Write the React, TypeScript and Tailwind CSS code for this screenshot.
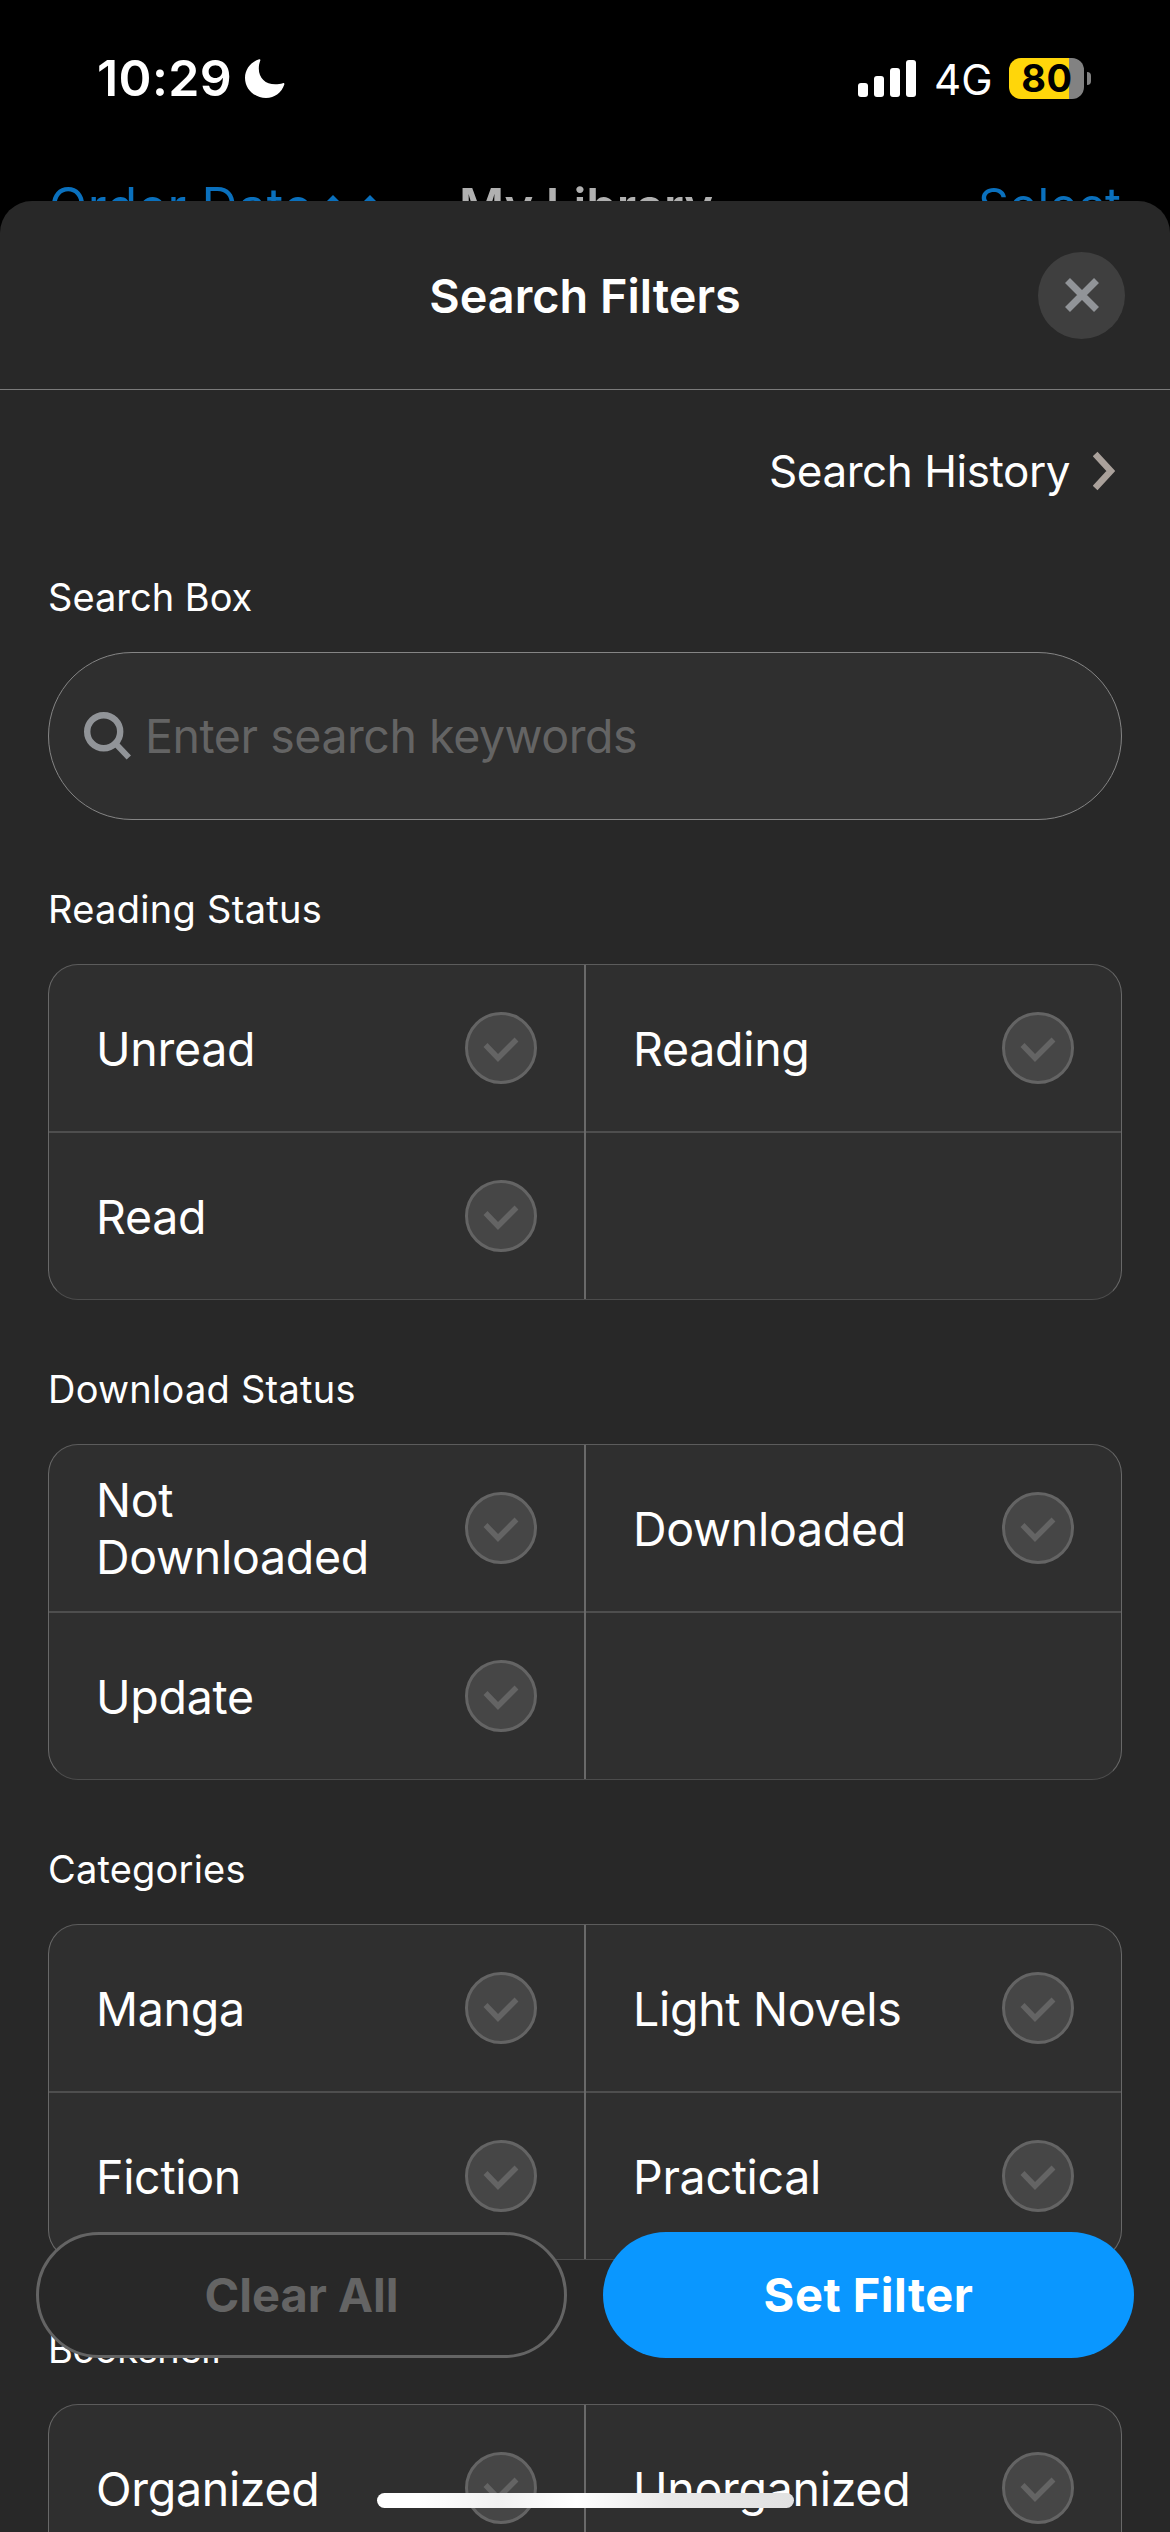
type Option = string | null;

type Group = { title: string; tracking: string; options: Option[] };

const GROUPS: Group[] = [
  { title: 'Reading Status', tracking: 'tracking-[0.3px]', options: ['Unread', 'Reading', 'Read', null] },
  { title: 'Download Status', tracking: 'tracking-[0.25px]', options: ['Not Downloaded', 'Downloaded', 'Update', null] },
  { title: 'Categories', tracking: 'tracking-[0.2px]', options: ['Manga', 'Light Novels', 'Fiction', 'Practical'] },
  { title: 'Bookshelf', tracking: 'tracking-[-0.4px]', options: ['Organized', 'Unorganized', null, null] },
];

function StatusBar() {
  return (
    <div className="flex h-[156px] items-center justify-between pl-[97px] pr-[79px] text-white">
      <div className="flex items-center">
        <span className="text-[50px] font-semibold leading-none tracking-[0.4px]">10:29</span>
        <svg className="ml-[13px] mt-px h-[39px] w-[40px]" viewBox="0 0 40 39" fill="currentColor">
          <path d="M14.2 0.2C15 0 15.6 0.6 15.3 1.5C14.3 4 13.8 6.6 13.8 9.4C13.8 19.2 20.6 25.3 30.2 25.3C33 25.3 35.5 25 37.8 24.2C38.9 23.8 39.7 24.4 39.3 25.5C36.8 33.4 29.7 39 21 39C9.500 39 0 30 0 18.900C0 10.200 6 2.800 14.200 0.200Z" />
        </svg>
      </div>
      <div className="flex items-center">
        <div className="flex h-[37px] items-end gap-[6px]">
          <div className="h-[14px] w-[10px] rounded-[3px] bg-white" />
          <div className="h-[21px] w-[10px] rounded-[3px] bg-white" />
          <div className="h-[29px] w-[10px] rounded-[3px] bg-white" />
          <div className="h-[37px] w-[10px] rounded-[3px] bg-white" />
        </div>
        <span className="ml-[18px] mt-[3px] w-[57px] text-[42px] leading-none">4G</span>
        <div className="ml-[18px] flex h-[41px] w-[75px] items-center justify-center rounded-[12px] bg-[linear-gradient(to_right,#ffd60a_60px,#828282_60px)]">
          <span className="ml-px text-[38px] font-bold leading-none tracking-[0.6px] text-black">80</span>
        </div>
        <div className="ml-[3px] h-[13px] w-[4px] rounded-r-full bg-[#828282]" />
      </div>
    </div>
  );
}

function LibraryNav() {
  return (
    <div className="grid h-[100px] grid-cols-[1fr_auto_1fr] items-center px-[49px] leading-none">
      <div className="flex items-center text-[#0a70bd]">
        <span className="text-[50px] tracking-[0.6px]">Order Date</span>
        <svg className="ml-[9px] h-[26px] w-[60px]" viewBox="0 0 60 26" fill="currentColor">
          <path d="M11 2L22 13L11 24L0 13Z" />
          <path d="M48 2L59 13L48 24L37 13Z" />
        </svg>
      </div>
      <span className="pl-[2px] text-[49px] font-semibold text-[#b0b0b0]">My Library</span>
      <span className="text-right text-[48.5px] text-[#0a70bd]">Select</span>
    </div>
  );
}

function CheckCircle() {
  return (
    <svg className="h-[72px] w-[72px] shrink-0" viewBox="0 0 72 72" fill="none">
      <circle cx="36" cy="36" r="34.5" fill="#464646" stroke="#646464" strokeWidth="3" />
      <path d="M20.500 33L33 46L51.500 27.500" stroke="#646464" strokeWidth="5.500" />
    </svg>
  );
}

function OptionCell({ label }: { label: Option }) {
  return (
    <button className="flex h-full items-center justify-between pl-[47px] pr-[47px] text-left">
      {label && (
        <>
          <span className="w-[340px] pt-[2px] text-[46.5px] leading-[57px] tracking-[-0.3px] text-white">{label}</span>
          <CheckCircle />
        </>
      )}
    </button>
  );
}

function OptionGrid({ options }: { options: Option[] }) {
  return (
    <div className="h-[336px] overflow-hidden rounded-[30px] border border-[#686868] border-b-[#4c4c4c] border-t-[#5c5c5c] bg-[#2f2f2f]">
      <div className="grid h-full grid-cols-[1fr_2px_1fr] grid-rows-[1fr_2px_1fr]">
        <OptionCell label={options[0]} />
        <div className="row-span-3 bg-[#696969]" />
        <OptionCell label={options[1]} />
        <div className="bg-[#4e4e4e]" />
        <div className="bg-[#4e4e4e]" />
        <OptionCell label={options[2]} />
        <OptionCell label={options[3]} />
      </div>
    </div>
  );
}

export default function App() {
  return (
    <div className="relative h-[2532px] w-[1170px] overflow-hidden bg-black font-['Inter',sans-serif]">
      <StatusBar />
      <LibraryNav />

      <div className="relative -mt-[55px] h-[2331px] overflow-hidden rounded-t-[32px] bg-[#282828] text-white">
        <header className="grid h-[189px] grid-cols-[1fr_auto_1fr] items-center border-b border-[#7a7a7a] px-[45px]">
          <h1 className="col-start-2 pt-[2px] text-[46.8px] font-semibold leading-none">Search Filters</h1>
          <button className="flex h-[87px] w-[87px] items-center justify-center justify-self-end rounded-full bg-[#3f3f3f]">
            <svg className="h-[34px] w-[34px]" viewBox="0 0 34 34" stroke="#919498" strokeWidth="7">
              <path d="M2.500 2.500L31.500 31.500M31.500 2.500L2.500 31.500" />
            </svg>
          </button>
        </header>

        <main className="px-[48px]">
          <div className="flex h-[162px] items-center justify-end pr-[7px]">
            <span className="text-[44px] leading-none tracking-[-0.45px]">Search History</span>
            <svg className="ml-[23px] h-[40px] w-[22px]" viewBox="0 -2 22 40" fill="none" stroke="#aaa19b" strokeWidth="6.500">
              <path d="M2.100 1L17.800 18L2.100 35" />
            </svg>
          </div>

          <section className="pt-[21px]">
            <h2 className="mb-[31px] text-[38px] leading-[48px]">Search Box</h2>
            <div className="flex h-[168px] items-center rounded-full border border-[#858585] bg-[#2f2f2f] pl-[35px]">
              <svg className="h-[48px] w-[48px]" viewBox="0 0 48 48" fill="none" stroke="#919498">
                <circle cx="19.700" cy="19.700" r="16.500" strokeWidth="6.400" />
                <path d="M31 31L44.800 45.500" strokeWidth="6" />
              </svg>
              <span className="ml-[13px] text-[46.5px] leading-none tracking-[-0.45px] text-[#646464]">Enter search keywords</span>
            </div>
          </section>

          {GROUPS.map((g) => (
            <section key={g.title} className="pt-[65px]">
              <h2 className="mb-[31px] text-[38px] leading-[48px]">
                <span className={g.tracking}>{g.title}</span>
              </h2>
              <OptionGrid options={g.options} />
            </section>
          ))}
        </main>
      </div>

      {/* Floating action bar */}
      <div className="absolute inset-x-[36px] bottom-[174px] grid h-[126px] grid-cols-2 gap-[36px] text-[47px] font-bold leading-none">
        <button className="rounded-full border-[3px] border-[#646464] bg-[#282828] pb-[2px] text-[#646464]">Clear All</button>
        <button className="rounded-full bg-[#0a97ff] pb-[2px] tracking-[0.5px] text-white">Set Filter</button>
      </div>

      {/* Home indicator */}
      <div className="absolute bottom-[24px] left-[377px] h-[15px] w-[417px] rounded-full bg-[linear-gradient(to_right,#ffffff_10%,#f1f1f1_29%,#ffffff_48%,#e9e9e9_70%,#e1e1e1_100%)]" />
    </div>
  );
}
